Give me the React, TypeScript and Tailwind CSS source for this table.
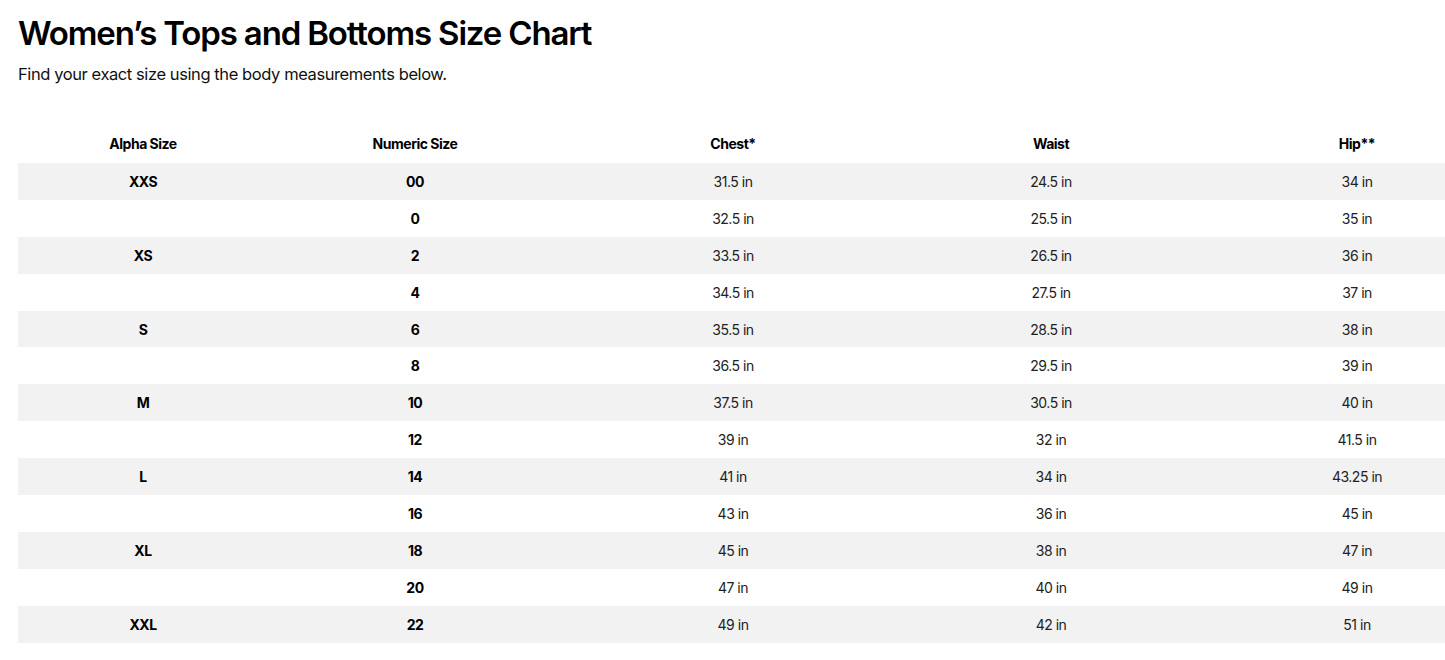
const rows: [string, string, string, string, string][] = [
  ["XXS", "00", "31.5 in", "24.5 in", "34 in"],
  ["", "0", "32.5 in", "25.5 in", "35 in"],
  ["XS", "2", "33.5 in", "26.5 in", "36 in"],
  ["", "4", "34.5 in", "27.5 in", "37 in"],
  ["S", "6", "35.5 in", "28.5 in", "38 in"],
  ["", "8", "36.5 in", "29.5 in", "39 in"],
  ["M", "10", "37.5 in", "30.5 in", "40 in"],
  ["", "12", "39 in", "32 in", "41.5 in"],
  ["L", "14", "41 in", "34 in", "43.25 in"],
  ["", "16", "43 in", "36 in", "45 in"],
  ["XL", "18", "45 in", "38 in", "47 in"],
  ["", "20", "47 in", "40 in", "49 in"],
  ["XXL", "22", "49 in", "42 in", "51 in"],
];

const headers = ["Alpha Size", "Numeric Size", "Chest*", "Waist", "Hip**"];

export default function App() {
  return (
    <div className="w-[1445px] h-[660px] overflow-hidden bg-white text-[#111] font-['Inter',sans-serif]">
      <div className="pl-[18px] pt-[11px]">
        <h1 className="text-[33px] leading-[44px] font-semibold tracking-[-0.035em] text-black">
          Women’s Tops and Bottoms Size Chart
        </h1>
        <p className="mt-[7px] text-[16.5px] leading-[24px] tracking-[-0.025em] text-[#111]">
          Find your exact size using the body measurements below.
        </p>

        <table className="mt-[39px] table-fixed border-collapse w-[1498px] text-[14px] tracking-[-0.035em]">
          <colgroup>
            <col className="w-[250px]" />
            <col className="w-[294px]" />
            <col className="w-[342px]" />
            <col className="w-[294px]" />
            <col className="w-[318px]" />
          </colgroup>
          <thead>
            <tr className="h-[38px]">
              {headers.map((h) => (
                <th key={h} className="text-center font-bold text-black align-middle pb-[2px]">
                  {h}
                </th>
              ))}
            </tr>
          </thead>
          <tbody>
            {rows.map((r, i) => (
              <tr key={i} className={`h-[36.9px] ${i % 2 === 0 ? "bg-[#f2f2f2]" : "bg-white"}`}>
                <td className="text-center font-bold text-black">{r[0]}</td>
                <td className="text-center font-bold text-black">{r[1]}</td>
                <td className="text-center text-[#222]">{r[2]}</td>
                <td className="text-center text-[#222]">{r[3]}</td>
                <td className="text-center text-[#222]">{r[4]}</td>
              </tr>
            ))}
          </tbody>
        </table>
      </div>
    </div>
  );
}
